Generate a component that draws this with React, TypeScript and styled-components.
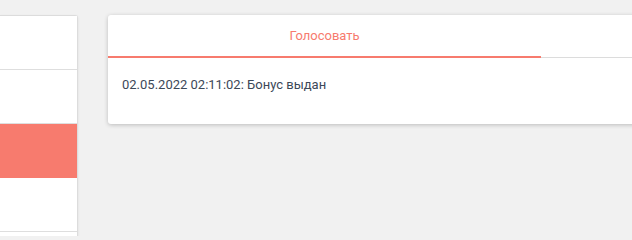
import styled, { createGlobalStyle } from "styled-components";

const accent = "#f77b6e";

const GlobalStyle = createGlobalStyle`
    html, body {
        margin: 0;
        padding: 0;
        background: #f1f1f1;
        overflow: hidden;
        font-family: Roboto, "Liberation Sans", sans-serif;
    }
`;

const Page = styled.div`
    display: flex;
    align-items: flex-start;
    gap: 30px;
    padding-top: 15px;
    width: 632px;
    height: 236px;
    box-sizing: border-box;
    overflow: hidden;
`;

const SideMenu = styled.div`
    width: 77px;
    background: #fff;
    border: 1px solid #dcdcdc;
    border-left: none;
    border-bottom: none;
    border-radius: 0 3px 0 0;
    box-shadow: 0 1px 3px rgba(0, 0, 0, 0.08);
    display: flex;
    flex-direction: column;
    flex-shrink: 0;
`;

const MenuRow = styled.div<{ $active?: boolean }>`
    height: 53px;
    background: ${p => (p.$active ? accent : "#fff")};
    border-bottom: 1px solid ${p => (p.$active ? accent : "#dedede")};
`;

const Card = styled.div`
    width: 866px;
    background: #fff;
    border-radius: 3px;
    box-shadow: 0 1px 4px rgba(0, 0, 0, 0.22);
    flex-shrink: 0;
`;

const TabBar = styled.div`
    display: grid;
    grid-template-columns: 1fr 1fr;
    border-bottom: 1px solid #dcdcdc;
`;

const Tab = styled.div<{ $active?: boolean }>`
    height: 41px;
    display: flex;
    align-items: center;
    justify-content: center;
    font-size: 13px;
    color: ${p => (p.$active ? accent : "#777")};
    border-bottom: 2px solid ${p => (p.$active ? accent : "transparent")};
    margin-bottom: -1px;
`;

const Body = styled.div`
    padding: 18px 15px 31px 14px;
    font-size: 13px;
    line-height: 17px;
    color: #3c4858;
`;

export default function App() {
    return (
        <>
            <GlobalStyle/>
            <Page>
                <SideMenu>
                    <MenuRow/>
                    <MenuRow/>
                    <MenuRow $active/>
                    <MenuRow/>
                    <MenuRow/>
                </SideMenu>
                <Card>
                    <TabBar>
                        <Tab $active>Голосовать</Tab>
                        <Tab/>
                    </TabBar>
                    <Body>02.05.2022 02:11:02: Бонус выдан</Body>
                </Card>
            </Page>
        </>
    );
}
